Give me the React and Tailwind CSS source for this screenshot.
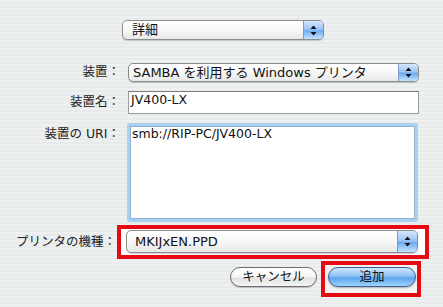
import React from "react";

const FONT = "font-['DejaVu_Sans','Noto_Sans_CJK_JP',sans-serif]";

function Arrows() {
  return (
    <svg width="7" height="11" viewBox="0 0 7 11">
      <path d="M3.5 0.5 L6.5 4 L0.5 4 Z" fill="#111" />
      <path d="M0.5 7 L6.5 7 L3.5 10.5 Z" fill="#111" />
    </svg>
  );
}

function Popup({ text, className = "", h = "h-[20px]", pl = "pl-[9px]" }) {
  return (
    <div
      className={`flex ${h} rounded-[5px] border border-[#8c8c8c] bg-[linear-gradient(to_bottom,#ffffff_0%,#f7f7f7_50%,#e8e8e8_100%)] shadow-[0_1px_1px_rgba(0,0,0,0.18)] overflow-hidden ${className}`}
    >
      <span className={`flex-1 flex items-center ${pl} text-[13px] text-[#111] whitespace-nowrap`}>
        {text}
      </span>
      <span className="w-[20px] flex items-center justify-center border-l border-[#7f9cc8] bg-[linear-gradient(to_bottom,#d6e8fb_0%,#9cc6f5_45%,#6eaaf0_55%,#c2e4ff_100%)]">
        <Arrows />
      </span>
    </div>
  );
}

export default function App() {
  return (
    <div
      className={`w-[443px] h-[307px] overflow-hidden ${FONT} bg-[repeating-linear-gradient(to_bottom,#eff1f1_0px,#eff1f1_2px,#e8ebeb_2px,#e8ebeb_4px)]`}
    >
      <div className="pt-[20px] pl-[122px]">
        <Popup text="詳細" className="w-[202px]" />
      </div>

      <div className="mt-[23px] flex items-center">
        <span className="w-[122px] text-right text-[12.5px] text-[#222] pr-[2px]">装置：</span>
        <Popup text="SAMBA を利用する Windows プリンタ" className="ml-[6px] w-[291px]" h="h-[19px]" pl="pl-[4px]" />
      </div>

      <div className="mt-[9px] flex items-center">
        <span className="w-[122px] text-right text-[12.5px] text-[#222] pr-[2px]">装置名：</span>
        <div className="ml-[6px] w-[291px] h-[23px] bg-white border border-[#9c9c9c] border-t-[#7a7a7a] pl-[2px] pt-[1px] text-[12.5px] leading-[14px] text-[#111]">
          JV400-LX
        </div>
      </div>

      <div className="mt-[9px] flex items-start">
        <span className="w-[122px] text-right text-[12.5px] text-[#222] pr-[2px] pt-[2px]">装置の URI：</span>
        <div className="ml-[5px] w-[291px] h-[99px] bg-white border-[3px] border-[#a9d1f1] rounded-[2px]">
          <div className="w-full h-full border border-[#8fb2cf] pl-[1px] text-[12.5px] leading-[13px] text-[#111]">
            smb://RIP-PC/JV400-LX
          </div>
        </div>
      </div>

      <div className="mt-[3px] flex items-center">
        <span className="w-[117px] text-right text-[12.5px] text-[#222] pr-[1px]">プリンタの機種：</span>
        <div className="w-[312px] h-[34px] border-4 border-[#e60a12] bg-white pl-[5px] pr-[7px] pt-[1px]">
          <Popup text="MKIJxEN.PPD" className="w-full" h="h-[23px]" pl="pl-[8px]" />
        </div>
      </div>

      <div className="mt-[2px] flex justify-end pr-[22px]">
        <div className="mt-[6px] mr-[4px] w-[87px] h-[20px] rounded-full border border-[#6e6e6e] bg-[linear-gradient(to_bottom,#ffffff_0%,#f6f6f6_50%,#e2e2e2_55%,#f5f5f5_100%)] shadow-[0_1px_1px_rgba(0,0,0,0.2)] flex items-center justify-center text-[12.5px] text-[#111]">
          キャンセル
        </div>
        <div className="w-[100px] h-[36px] border-4 border-[#e60a12] bg-[#f4f4f4] pl-[3px] pr-[1px] pt-[2px]">
          <div className="w-[88px] h-[20px] rounded-full border border-[#3d5f98] bg-[linear-gradient(to_bottom,#cfe6fd_0%,#8fc3f6_45%,#5ea5ef_55%,#9fd4ff_100%)] shadow-[0_1px_2px_rgba(0,0,0,0.3)] flex items-center justify-center text-[12.5px] text-[#111]">
            追加
          </div>
        </div>
      </div>
    </div>
  );
}
